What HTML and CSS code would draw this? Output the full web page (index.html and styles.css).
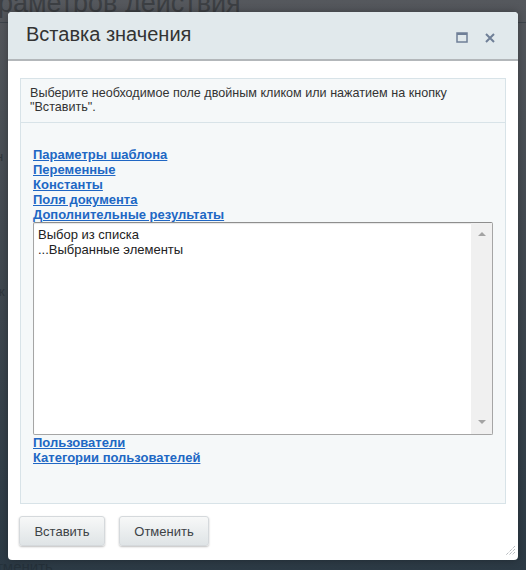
FILE: index.html
```html
<!DOCTYPE html>
<html>
<head>
	<meta charset="UTF-8">
	<title>Вставка значения</title>
	<link rel="stylesheet" href="styles.css">
</head>
<body>
	<div class="page">
		<!--страница под затемнением-->
		<div class="bg-title">раметров действия</div>
		<div class="bg-line bg-line-1"></div>
		<div class="bg-char bg-char-1">н</div>
		<div class="bg-char bg-char-2">ж</div>
		<div class="bg-bottom">тменить</div>

		<!--диалог-->
		<div class="dialog">
			<div class="dialog-head">
				<span class="dialog-title">Вставка значения</span>
				<span class="head-icons">
					<svg width="12" height="12" viewBox="0 0 12 12"><rect x="1" y="1" width="10" height="9" fill="none" stroke="#6f7f97" stroke-width="1.5"/><rect x="1" y="1" width="10" height="2" fill="#6f7f97"/></svg>
					<svg width="12" height="12" viewBox="0 0 12 12"><path d="M2 2 L10 10 M10 2 L2 10" stroke="#6f7f97" stroke-width="2"/></svg>
				</span>
			</div>
			<div class="dialog-body">
				<div class="panel">
					<div class="panel-note">Выберите необходимое поле двойным кликом или нажатием на кнопку "Вставить".</div>
					<div class="panel-list">
						<a href="#" class="grp">Параметры шаблона</a>
						<a href="#" class="grp">Переменные</a>
						<a href="#" class="grp">Константы</a>
						<a href="#" class="grp">Поля документа</a>
						<a href="#" class="grp">Дополнительные результаты</a>
						<div class="listbox">
							<div class="listbox-items">
								<div>Выбор из списка</div>
								<div>...Выбранные элементы</div>
							</div>
							<div class="scroll">
								<span class="arr arr-up"></span>
								<span class="arr arr-down"></span>
							</div>
						</div>
						<a href="#" class="grp">Пользователи</a>
						<a href="#" class="grp">Категории пользователей</a>
					</div>
				</div>
				<div class="buttons">
					<button class="btn">Вставить</button>
					<button class="btn">Отменить</button>
				</div>
			</div>
			<svg class="grip" width="10" height="10" viewBox="0 0 10 10"><path d="M10 1 L1 10 M10 4 L4 10 M10 7 L7 10" stroke="#9aa0a6" stroke-width="1" stroke-dasharray="1 1"/></svg>
		</div>
	</div>
</body>
</html>
```

FILE: styles.css
```css
* {
	margin: 0;
	padding: 0;
	box-sizing: border-box;
}

body {
	font-family: "Liberation Sans", Arial, sans-serif;
	background: #2d3a45;
}

.page {
	width: 526px;
	height: 570px;
	position: relative;
	overflow: hidden;
	background: linear-gradient(#55585d 0%, #434a51 40%, #2c3a45 100%);
}

/* фон страницы */
.bg-title {
	position: absolute;
	left: -2px;
	top: -12px;
	font-size: 27px;
	color: #3c3f43;
}

.bg-line {
	position: absolute;
	left: 0;
	right: 0;
	height: 1px;
	background: #3d444b;
}

.bg-line-1 {
	top: 22px;
}

.bg-char {
	position: absolute;
	left: -4px;
	font-size: 13px;
	color: #30363c;
}

.bg-char-1 {
	top: 149px;
}

.bg-char-2 {
	top: 284px;
}

.bg-bottom {
	position: absolute;
	left: -4px;
	top: 558px;
	font-size: 15px;
	color: #25313a;
}

/* диалог */
.dialog {
	position: absolute;
	left: 8px;
	top: 12px;
	width: 510px;
	height: 548px;
	background: #fff;
	border-radius: 4px;
	box-shadow: 0 0 8px rgba(0, 0, 0, 0.3);
}

.dialog-head {
	height: 49px;
	background: #e1e9ec;
	border-bottom: 2px solid #b3b7ba;
	border-radius: 4px 4px 0 0;
	display: flex;
	align-items: center;
	justify-content: space-between;
	padding: 0 22px 0 18px;
}

.dialog-title {
	font-size: 20px;
	color: #333;
	padding-bottom: 2px;
}

.head-icons {
	display: flex;
	gap: 16px;
	align-items: center;
	padding-top: 4px;
}

.dialog-body {
	padding: 17px 12px 0;
}

.panel {
	height: 426px;
	background: #f5f8f9;
	border: 1px solid #d8e3e8;
	font-size: 12px;
	color: #333;
}

.panel-note {
	padding: 7px 9px 6px;
	font-size: 12.6px;
	line-height: 14px;
	border-bottom: 1px solid #d8e3e8;
	height: 44px;
}

.panel-list {
	padding: 24px 12px 0;
	line-height: 15px;
}

.grp {
	display: block;
	width: max-content;
	font-size: 13px;
	color: #2067c4;
	font-weight: bold;
	text-decoration: underline;
}

.listbox {
	height: 213px;
	background: #fff;
	border: 1px solid #a5a5a5;
	border-top-color: #8e8e8e;
	border-radius: 2px;
	display: flex;
	box-shadow: inset 0 1px 1px rgba(0, 0, 0, 0.1);
}

.listbox-items {
	flex: 1;
	padding: 4px 4px;
	font-size: 13px;
	line-height: 15px;
	color: #222;
}

.scroll {
	width: 21px;
	background: #f0f0f0;
	display: flex;
	flex-direction: column;
	justify-content: space-between;
	align-items: center;
	padding: 9px 0 10px;
}

.arr {
	width: 0;
	height: 0;
	border-left: 4px solid transparent;
	border-right: 4px solid transparent;
}

.arr-up {
	border-bottom: 4px solid #a3a3a3;
}

.arr-down {
	border-top: 4px solid #a3a3a3;
}

.buttons {
	display: flex;
	gap: 15px;
	padding-top: 12px;
}

.btn {
	height: 30px;
	padding: 0 14px;
	font-family: "Liberation Sans", Arial, sans-serif;
	font-size: 13px;
	color: #3d4246;
	background: linear-gradient(#f7f8f8, #dfe4e6);
	border: 1px solid #d5d9dc;
	border-radius: 3px;
	box-shadow: 0 1px 2px rgba(0, 0, 0, 0.25);
	margin-left: -1px;
}

.btn:first-child {
	width: 86px;
}

.btn:last-child {
	width: 90px;
}

.grip {
	position: absolute;
	right: 3px;
	bottom: 5px;
}
```
